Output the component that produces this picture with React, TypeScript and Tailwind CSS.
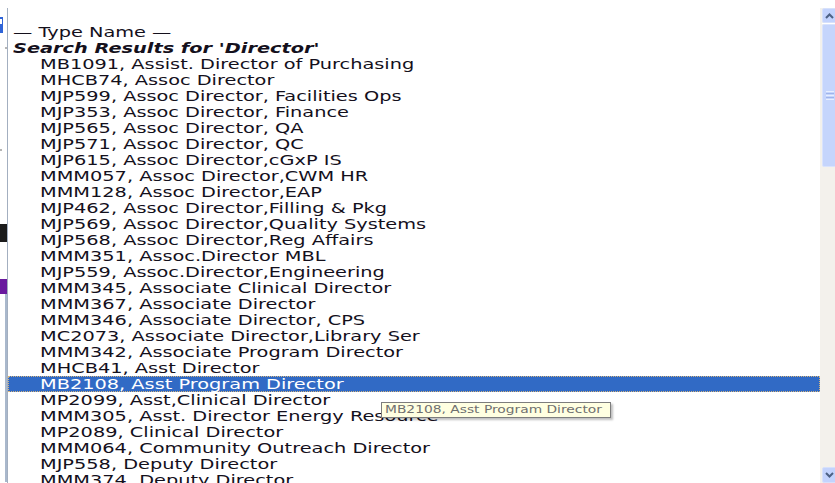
const results = [
  'MB1091, Assist. Director of Purchasing',
  'MHCB74, Assoc Director',
  'MJP599, Assoc Director, Facilities Ops',
  'MJP353, Assoc Director, Finance',
  'MJP565, Assoc Director, QA',
  'MJP571, Assoc Director, QC',
  'MJP615, Assoc Director,cGxP IS',
  'MMM057, Assoc Director,CWM HR',
  'MMM128, Assoc Director,EAP',
  'MJP462, Assoc Director,Filling & Pkg',
  'MJP569, Assoc Director,Quality Systems',
  'MJP568, Assoc Director,Reg Affairs',
  'MMM351, Assoc.Director MBL',
  'MJP559, Assoc.Director,Engineering',
  'MMM345, Associate Clinical Director',
  'MMM367, Associate Director',
  'MMM346, Associate Director, CPS',
  'MC2073, Associate Director,Library Ser',
  'MMM342, Associate Program Director',
  'MHCB41, Asst Director',
  'MB2108, Asst Program Director',
  'MP2099, Asst,Clinical Director',
  'MMM305, Asst. Director Energy Resource',
  'MP2089, Clinical Director',
  'MMM064, Community Outreach Director',
  'MJP558, Deputy Director',
  'MMM374, Deputy Director',
];

const selected = 'MB2108, Asst Program Director';

function Wide({ children, className = '' }: { children: React.ReactNode; className?: string }) {
  return (
    <span className={`inline-block origin-left scale-x-[1.38] whitespace-nowrap ${className}`}>
      {children}
    </span>
  );
}

function PageEdge() {
  return (
    <div className="flex w-[7px] shrink-0 flex-col">
      <div className="h-[17px]" />
      <div className="flex h-[16px] w-[3px] flex-col bg-[#2f64d8]">
        <div className="mt-[2px] h-[5px] w-[2px] bg-white" />
      </div>
      <div className="ml-[5px] mt-[14px] h-[2px] w-[2px] bg-[#b5b5b5]" />
      <div className="mt-[100px] h-[2px] w-[2px] bg-[#b5b5b5]" />
      <div className="mt-[73px] h-[18px] w-[7px] bg-[#1b1b1b]" />
      <div className="mt-[37px] h-[15px] w-[7px] bg-[#6a1a9e]" />
      <div className="ml-[5px] h-[188px] w-[2px] bg-[#a9b8cc]" />
    </div>
  );
}

function ScrollBar() {
  return (
    <div className="flex w-[15px] shrink-0 flex-col overflow-hidden bg-[#f3f1ec] pl-[2px]">
      <div className="flex h-[15px] w-[15px] shrink-0 items-center justify-center rounded-[2px] border border-[#d7e1fb] bg-[#c3d3fd]">
        <svg width="9" height="6" viewBox="0 0 9 6">
          <path d="M1 5 L4.5 1.5 L8 5" fill="none" stroke="#4d6185" strokeWidth="2" />
        </svg>
      </div>
      <div className="h-[1px] shrink-0 bg-white" />
      <div className="flex h-[143px] w-[15px] shrink-0 items-center justify-center rounded-[2px] border border-[#d9e3fd] bg-[#c5d5fc]">
        <div className="flex w-[8px] flex-col gap-[1px]">
          <div className="h-[1px] bg-[#e8effe]" />
          <div className="h-[1px] bg-[#9fb4ea]" />
          <div className="h-[1px] bg-[#e8effe]" />
          <div className="h-[1px] bg-[#9fb4ea]" />
          <div className="h-[1px] bg-[#e8effe]" />
        </div>
      </div>
      <div className="flex-1" />
      <div className="flex h-[16px] w-[15px] shrink-0 items-center justify-center rounded-[2px] border border-[#d7e1fb] bg-[#c3d3fd]">
        <svg width="9" height="6" viewBox="0 0 9 6">
          <path d="M1 1 L4.5 4.5 L8 1" fill="none" stroke="#4d6185" strokeWidth="2" />
        </svg>
      </div>
    </div>
  );
}

export default function App() {
  return (
    <div className="relative flex h-[483px] w-[835px] overflow-hidden bg-white font-['DejaVu_Sans',sans-serif] text-[14px] text-[#14101c]">
      <PageEdge />

      <div className="mt-2 flex min-w-0 flex-1 border-l border-[#a3afc0]">
        <ul className="min-w-0 flex-1 overflow-hidden">
          <li className="h-4" />
          <li className="h-4 pl-[5px] leading-4">
            <Wide>— Type Name —</Wide>
          </li>
          <li className="h-4 pl-[5px] leading-4 font-bold italic">
            <Wide>Search Results for 'Director'</Wide>
          </li>
          {results.map((name) =>
            name === selected ? (
              <li
                key={name}
                className="h-4 border border-dotted border-[#d6b47c] bg-[#316ac5] pl-[31px] leading-[14px] text-white"
              >
                <Wide>{name}</Wide>
              </li>
            ) : (
              <li key={name} className="h-4 pl-[32px] leading-4">
                <Wide>{name}</Wide>
              </li>
            ),
          )}
        </ul>
        <ScrollBar />
      </div>

      <div className="absolute left-[381px] top-[402px] h-[16px] w-[230px] border border-[#7d7d7d] bg-[#ffffe1] pl-[3px] text-[10px] leading-[14px] text-[#6f6f6f] shadow-[2px_2px_2px_rgba(0,0,0,0.25)]">
        <Wide>{selected}</Wide>
      </div>
    </div>
  );
}
